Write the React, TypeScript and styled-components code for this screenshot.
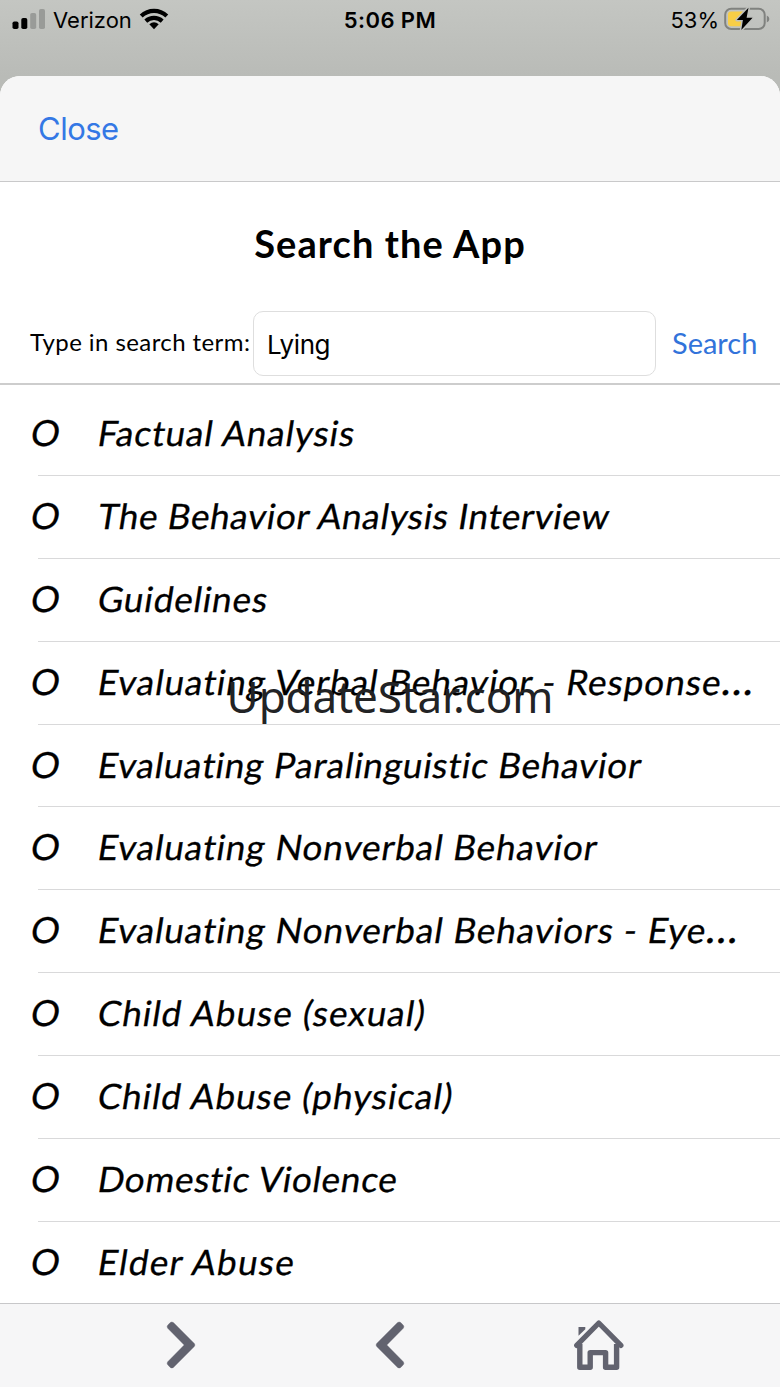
import React from "react";
import styled, { createGlobalStyle } from "styled-components";

const Global = createGlobalStyle`
  * { box-sizing: border-box; }
  body { margin: 0; background: #fff; }
  button, input { font: inherit; border: 0; background: none; padding: 0; margin: 0; }
`;

const Screen = styled.div`
  position: relative;
  width: 780px;
  height: 1387px;
  display: flex;
  flex-direction: column;
  overflow: hidden;
  background: linear-gradient(#c4c6c2 0, #b9bbb7 76px, #b9bbb7 100%);
  color: #000;
  font-family: Lato, sans-serif;
`;

const StatusBar = styled.header`
  display: grid;
  grid-template-columns: 1fr auto 1fr;
  align-items: center;
  height: 40px;
  margin-bottom: 36px;
  padding: 0 10px 0 12px;
  font: 400 22px/40px Inter, sans-serif;

  svg {
    margin-bottom: 2px;
  }
`;

const StatusGroup = styled.div<{ $end?: boolean }>`
  display: flex;
  align-items: center;
  justify-content: ${(p) => (p.$end ? "flex-end" : "flex-start")};
`;

const StatusText = styled.span<{ $before?: number; $after?: number }>`
  margin: 0 ${(p) => p.$after ?? 0}px 0 ${(p) => p.$before ?? 0}px;
  white-space: nowrap;
`;

const Clock = styled.span`
  font-weight: 600;
  letter-spacing: 0.4px;
  margin-right: 2px;
`;

const Sheet = styled.main`
  flex: 1;
  min-height: 0;
  display: flex;
  flex-direction: column;
  border-radius: 20px 20px 0 0;
  overflow: hidden;
  background: #fff;
`;

const SheetHeader = styled.div`
  display: flex;
  align-items: center;
  height: 106px;
  flex: none;
  padding-left: 38px;
  background: #f6f6f6;
  border-bottom: 1px solid #c9c9ca;
`;

const CloseButton = styled.button`
  color: #3478e5;
  font: 400 31px/40px Inter, sans-serif;
  letter-spacing: -0.5px;
`;

const SearchPanel = styled.section`
  flex: none;
  height: 203px;
  border-bottom: 2px solid #cdcdcd;
`;

const Title = styled.h1`
  margin: 0;
  padding-top: 37px;
  height: 129px;
  text-align: center;
  font: 700 38px/48px Lato, sans-serif;
  letter-spacing: 1.1px;
`;

const SearchForm = styled.div`
  display: flex;
  align-items: center;
  height: 65px;
  padding-left: 30px;
`;

const TermLabel = styled.label`
  width: 223px;
  padding-bottom: 3px;
  font-size: 24px;
  line-height: 30px;
  letter-spacing: 0.42px;
  white-space: nowrap;
`;

const TermInput = styled.input`
  width: 403px;
  height: 65px;
  padding: 1px 13px 0;
  border: 1px solid #dedede;
  border-radius: 10px;
  color: #000;
  background: #fff;
  font: 400 26px/32px Inter, sans-serif;
  letter-spacing: -0.4px;
  outline: none;
`;

const SearchButton = styled.button`
  margin-left: 16px;
  padding-bottom: 2px;
  color: #3273da;
  font-size: 29px;
  line-height: 36px;
`;

const Results = styled.ul`
  flex: 1;
  min-height: 0;
  margin: 0;
  padding: 8px 0 0;
  list-style: none;
`;

const Row = styled.li`
  display: flex;
  height: 82.9px;
  padding-left: 31px;
  font-size: 35px;
  line-height: 79px;
  -webkit-text-stroke: 0.3px #000;
  background: linear-gradient(#d9d9da, #d9d9da) 38px 100% / 742px 1px no-repeat;
`;

const Slanted = styled.span<{ $spacing?: number }>`
  display: block;
  letter-spacing: ${(p) => p.$spacing ?? 0}px;
  white-space: nowrap;
  transform: skewX(-9deg);
`;

const Bullet = styled(Slanted)`
  width: 67px;
  flex: none;
  font-size: 36px;
`;

const Ellipsis = styled.span`
  font-size: 43px;
  line-height: 1;
`;

const Footer = styled.nav`
  flex: none;
  display: grid;
  grid-template-columns: 362px 56px 1fr;
  align-items: center;
  height: 84px;
  padding-bottom: 2px;
  background: #f6f6f7;
  border-top: 1px solid #c7c7c9;
  color: #62636f;
`;

const NavButton = styled.button`
  display: flex;
  justify-content: center;
  color: inherit;
`;

const Watermark = styled.div`
  position: absolute;
  left: 0;
  right: 0;
  top: 666px;
  text-align: center;
  color: #222325;
  font: 400 44px/60px "Noto Sans", sans-serif;
  letter-spacing: -0.1px;
  pointer-events: none;
`;

const SignalIcon = () => (
  <svg width="34" height="22" viewBox="0 0 34 22">
    <rect x="0.5" y="13.5" width="6" height="7.5" rx="1.8" />
    <rect x="9.3" y="10" width="6" height="11" rx="1.8" />
    <rect x="18.2" y="5" width="6" height="16" rx="1.8" fill="#999b98" />
    <rect x="27" y="1" width="6" height="20" rx="1.8" fill="#999b98" />
  </svg>
);

const WifiIcon = () => (
  <svg width="30" height="22" viewBox="0 0 30 22">
    <g fill="none" stroke="#000" strokeWidth="4.2">
      <path d="M2.2 8C9.5 1.2 20.5 1.2 27.8 8" />
      <path d="M6.8 13.1C11.5 8.8 18.5 8.8 23.2 13.1" />
    </g>
    <path d="M10.3 16.3Q15 12.4 19.7 16.3L15 21.2Z" />
  </svg>
);

const BatteryIcon = () => (
  <svg width="46" height="26" viewBox="0 0 46 26">
    <rect x="1.2" y="2.7" width="39.5" height="20.3" rx="6" fill="none" stroke="#80827f" strokeWidth="2" />
    <path d="M7 5.5H21V20.3H7Q4 20.3 4 17.3V8.5Q4 5.5 7 5.5Z" fill="#f8ce46" />
    <path d="M42.8 9.5Q45.4 10.5 45.4 13T42.8 16.5Z" fill="#80827f" />
    <path
      d="M24.5 1.8L12.8 14H18.9L17.3 24L28.6 11.8H22.6Z"
      fill="#000"
      stroke="#bfc1bd"
      strokeWidth="3"
      strokeLinejoin="round"
      paintOrder="stroke"
    />
  </svg>
);

const Chevron = ({ left }: { left?: boolean }) => (
  <svg width="30" height="48" viewBox="0 0 30 48">
    <path
      transform={left ? "matrix(-1 0 0 1 30 0)" : undefined}
      d="M7.4 1.6L28.3 22.5Q29.6 24 28.3 25.5L7.4 46.4Q5.8 47.6 4.3 46.4L1.7 43.8Q.5 42.2 1.7 40.8L18.2 24L1.7 7.2Q.5 5.8 1.7 4.2L4.3 1.6Q5.8.4 7.4 1.6Z"
      fill="currentColor"
      stroke="currentColor"
      strokeWidth="0.4"
    />
  </svg>
);

const HomeIcon = () => (
  <svg width="50" height="52" viewBox="0 0 50 52">
    <g fill="none" stroke="currentColor" strokeLinejoin="round">
      <path d="M2.7 26.4L24.8 4L46.9 26.4" strokeWidth="5.2" strokeLinecap="round" />
      <path d="M5.8 25V48.2H16.2V33.6H31.6V48.2H42.6V25" strokeWidth="5.4" />
    </g>
    <path d="M4.5 8H11.3V10.2L4.5 16.8Z" fill="currentColor" />
  </svg>
);

const results: { title: string; spacing: number; truncated?: boolean }[] = [
  { title: "Factual Analysis", spacing: 0.95 },
  { title: "The Behavior Analysis Interview", spacing: 0.71 },
  { title: "Guidelines", spacing: 0.93 },
  { title: "Evaluating Verbal Behavior - Response", spacing: 1.02, truncated: true },
  { title: "Evaluating Paralinguistic Behavior", spacing: 0.84 },
  { title: "Evaluating Nonverbal Behavior", spacing: 0.97 },
  { title: "Evaluating Nonverbal Behaviors - Eye", spacing: 0.98, truncated: true },
  { title: "Child Abuse (sexual)", spacing: 1.08 },
  { title: "Child Abuse (physical)", spacing: 1.02 },
  { title: "Domestic Violence", spacing: 0.75 },
  { title: "Elder Abuse", spacing: 1.35 },
];

export default function App() {
  return (
    <Screen>
      <Global />
      <StatusBar>
        <StatusGroup>
          <SignalIcon />
          <StatusText $before={7} $after={7}>Verizon</StatusText>
          <WifiIcon />
        </StatusGroup>
        <Clock>5:06 PM</Clock>
        <StatusGroup $end>
          <StatusText $after={5}>53%</StatusText>
          <BatteryIcon />
        </StatusGroup>
      </StatusBar>
      <Sheet>
        <SheetHeader>
          <CloseButton>Close</CloseButton>
        </SheetHeader>
        <SearchPanel>
          <Title>Search the App</Title>
          <SearchForm>
            <TermLabel htmlFor="term">Type in search term:</TermLabel>
            <TermInput id="term" defaultValue="Lying" />
            <SearchButton>Search</SearchButton>
          </SearchForm>
        </SearchPanel>
        <Results>
          {results.map((r) => (
            <Row key={r.title}>
              <Bullet>O</Bullet>
              <Slanted $spacing={r.spacing}>
                {r.title}
                {r.truncated && <Ellipsis>…</Ellipsis>}
              </Slanted>
            </Row>
          ))}
        </Results>
        <Footer>
          <NavButton aria-label="Next">
            <Chevron />
          </NavButton>
          <NavButton aria-label="Previous">
            <Chevron left />
          </NavButton>
          <NavButton aria-label="Home">
            <HomeIcon />
          </NavButton>
        </Footer>
      </Sheet>
      <Watermark>UpdateStar.com</Watermark>
    </Screen>
  );
}
